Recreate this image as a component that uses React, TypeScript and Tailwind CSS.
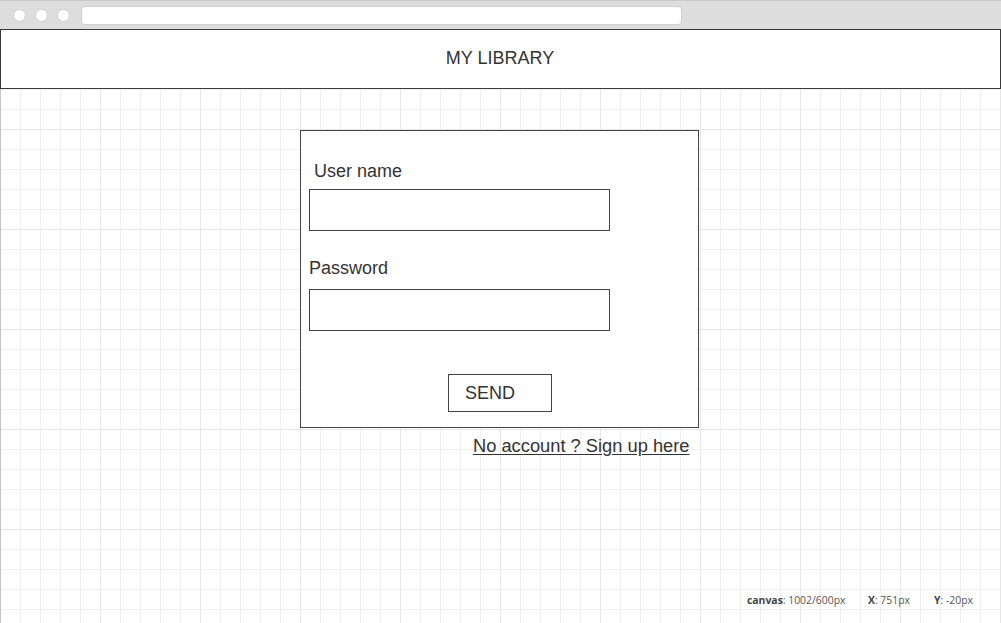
export default function App() {
  return (
    <div className="flex h-[623px] w-[1001px] flex-col overflow-hidden bg-white font-['Liberation_Sans',Arial,sans-serif] text-[#333]">
      {/* browser chrome */}
      <div className="flex h-[29px] shrink-0 items-center border-t border-[#c9c9c9] bg-[#dddddd] pl-[13px]">
        <div className="h-[13px] w-[13px] rounded-full border border-[#d0d0d0] bg-white" />
        <div className="ml-[9px] h-[13px] w-[13px] rounded-full border border-[#d0d0d0] bg-white" />
        <div className="ml-[9px] h-[13px] w-[13px] rounded-full border border-[#d0d0d0] bg-white" />
        <div className="ml-[11px] h-[19px] w-[601px] rounded-[4px] border border-[#cfcfcf] bg-white" />
      </div>

      {/* header */}
      <div className="flex h-[60px] w-[1001px] shrink-0 items-center justify-center border border-[#3a3a3a] bg-white pb-[2px] pr-[1px] text-[18px] leading-[20px] text-[#333]">
        MY LIBRARY
      </div>

      {/* canvas */}
      <div className="flex flex-1 flex-col border-l border-[#c4c4c4] bg-white bg-origin-border bg-[linear-gradient(to_right,#e7e7e7_1px,transparent_1px),linear-gradient(to_bottom,#e7e7e7_1px,transparent_1px),linear-gradient(to_right,#f0f0f0_1px,transparent_1px),linear-gradient(to_bottom,#f0f0f0_1px,transparent_1px)] bg-[size:100px_100px,100px_100px,20px_20px,20px_20px] bg-[position:0_0,0_40px,0_0,0_0]">
        <div className="ml-[299px] mt-[41px] flex h-[298px] w-[399px] flex-col border border-[#444] bg-white">
          <div className="ml-[13px] mt-[30px] text-[18px] leading-[20px]">User name</div>
          <div className="ml-[8px] mt-[8px] h-[42px] w-[301px] border border-[#444] bg-white" />
          <div className="ml-[8px] mt-[27px] text-[18px] leading-[20px]">Password</div>
          <div className="ml-[8px] mt-[11px] h-[42px] w-[301px] border border-[#444] bg-white" />
          <div className="ml-[147px] mt-[43px] flex h-[38px] w-[104px] items-center border border-[#444] bg-white pl-[16px] text-[18px] leading-[20px]">
            SEND
          </div>
        </div>
        <div className="ml-[472px] mt-[8px] text-[18.3px] leading-[20px] underline underline-offset-[2px]">
          No account ? Sign up here
        </div>

        <div className="mt-auto flex pb-[16px] pl-[746px] font-['Open_Sans',sans-serif] text-[10.4px] leading-[14px] text-[#555]">
          <div className="w-[121px]">
            <span className="font-bold text-[#444]">canvas</span>: 1002/600px
          </div>
          <div className="w-[66px]">
            <span className="font-bold text-[#444]">X</span>: 751px
          </div>
          <div>
            <span className="font-bold text-[#444]">Y</span>: -20px
          </div>
        </div>
      </div>
    </div>
  );
}
